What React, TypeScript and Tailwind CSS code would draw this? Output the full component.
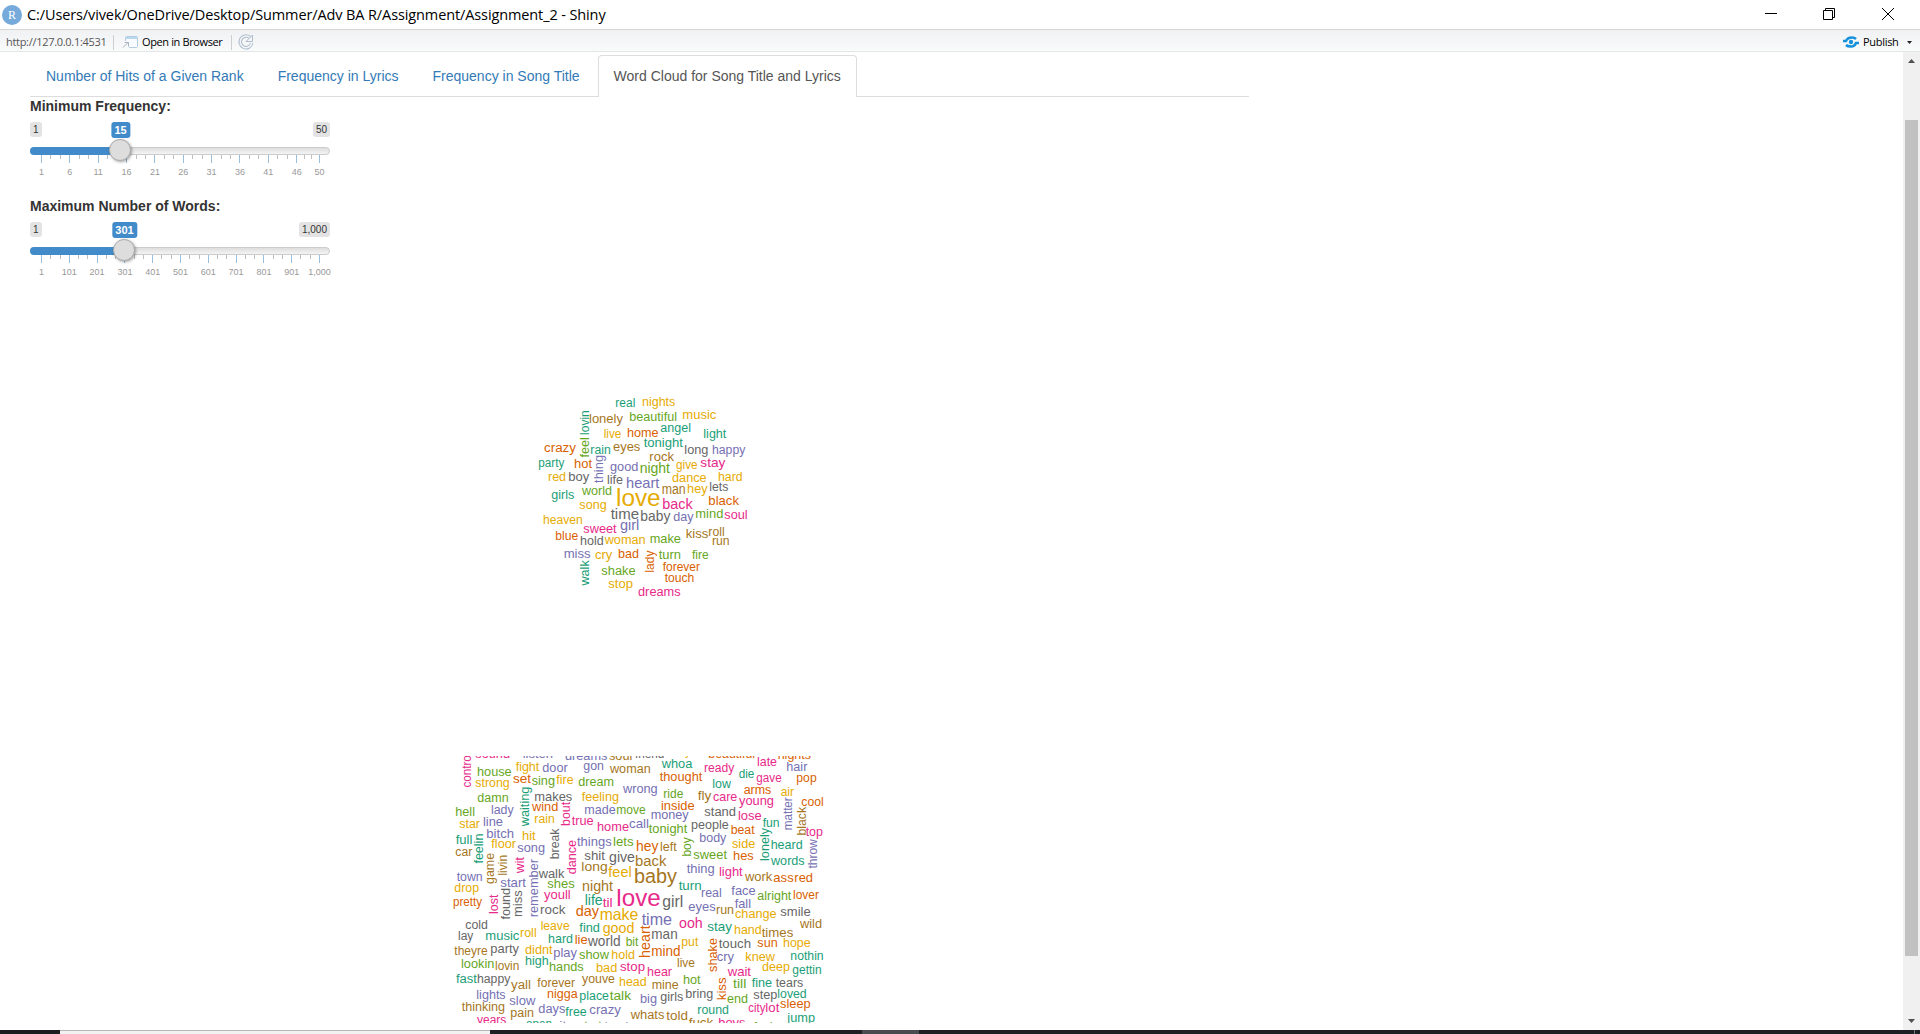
import React from "react";

const PALETTE: Record<string, string> = {
  g: "#1b9e77",
  o: "#d95f02",
  p: "#7570b3",
  k: "#e7298a",
  l: "#66a61e",
  y: "#e6ab02",
  b: "#a6761d",
  d: "#666666",
};

// text, start, end, baseline, colour, font size, vertical
// Start, end and baseline are in thirds of a pixel. For vertical words start is
// the lower end, end the upper one, and baseline the x of the baseline.
type Word = [string, number, number, number, string, number?, boolean?];

const TITLE_TOP: Word[] = [
  ["real", 256, 316, 53, "g"], ["nights", 336, 436, 50, "y"], ["lonely", 177, 279, 101, "b"],
  ["beautiful", 298, 441, 93, "l"], ["music", 457, 559, 87, "y"], ["live", 221, 274, 146, "y"],
  ["home", 291, 386, 142, "o", 13], ["angel", 391, 483, 126, "g"], ["light", 520, 589, 146, "g"],
  ["crazy", 42, 138, 186, "o"], ["rain", 181, 242, 194, "g"], ["eyes", 249, 331, 183, "b"],
  ["tonight", 341, 459, 171, "g"], ["long", 463, 535, 192, "d", 12.5], ["happy", 546, 646, 192, "p"],
  ["party", 25, 103, 231, "g"], ["hot", 132, 186, 236, "o", 13], ["good", 240, 325, 243, "p", 13],
  ["rock", 358, 432, 215, "b", 13], ["night", 329, 420, 249, "l", 14], ["give", 438, 503, 237, "y"],
  ["stay", 511, 586, 231, "k", 13], ["red", 54, 108, 273, "y"], ["boy", 115, 178, 274, "d", 13],
  ["life", 231, 279, 284, "d", 13], ["heart", 288, 388, 294, "p", 15], ["dance", 426, 530, 276, "y"],
  ["hard", 564, 638, 273, "y"], ["girls", 64, 133, 327, "g"], ["world", 156, 246, 317, "l", 13],
  ["man", 395, 467, 314, "b", 14], ["hey", 471, 533, 311, "y", 13], ["lets", 538, 595, 305, "d", 13],
  ["lovin", 136, 62, 178, "g", 12.5, true], ["feel", 204, 143, 178, "l", 13, true], ["thing", 280, 196, 219, "p", 12.5, true],
];

const TITLE_BOTTOM: Word[] = [
  ["love", 258, 392, 35, "y", 23.5], ["song", 148, 230, 42, "y"], ["back", 397, 488, 42, "k", 14],
  ["black", 535, 627, 30, "o", 13], ["time", 242, 327, 72, "d", 15], ["baby", 331, 421, 80, "d", 14],
  ["day", 430, 491, 80, "p", 13], ["mind", 496, 580, 69, "l", 13], ["soul", 583, 653, 72, "k", 13],
  ["heaven", 39, 158, 89, "y"], ["sweet", 160, 260, 114, "k", 13], ["girl", 270, 328, 106, "p", 14.5],
  ["blue", 76, 145, 135, "o", 13], ["hold", 150, 221, 152, "d", 13], ["woman", 224, 347, 147, "y"],
  ["make", 359, 453, 144, "l", 13], ["kiss", 467, 535, 131, "b", 13], ["roll", 535, 584, 123, "b"],
  ["run", 546, 599, 150, "b"], ["miss", 101, 182, 189, "p"], ["cry", 195, 247, 192, "y"],
  ["bad", 264, 327, 189, "o", 13], ["turn", 386, 453, 192, "l"], ["fire", 486, 536, 192, "l"],
  ["shake", 214, 317, 242, "l"], ["forever", 398, 510, 228, "o"], ["touch", 404, 493, 261, "o"],
  ["stop", 235, 309, 279, "y"], ["dreams", 324, 452, 303, "k"],
  ["walk", 273, 197, 177, "g", 12.5, true], ["lady", 234, 168, 371, "o", 12.5, true],
];

const LYRICS_NW: Word[] = [
  ["sound", 91, 195, 26, "k"], ["listen", 233, 324, 25, "p"], ["dreams", 360, 487, 30, "p"],
  ["soul", 492, 562, 30, "b"], ["fight", 212, 283, 63, "y"], ["door", 292, 368, 68, "p"],
  ["gon", 415, 477, 62, "p"], ["woman", 495, 617, 69, "b"], ["house", 96, 200, 80, "l"],
  ["strong", 91, 194, 113, "y"], ["set", 204, 258, 101, "o", 13], ["sing", 260, 330, 105, "l", 13],
  ["fire", 334, 386, 104, "y"], ["dream", 400, 507, 110, "l"], ["wrong", 534, 638, 131, "p"],
  ["damn", 97, 191, 158, "l"], ["makes", 268, 382, 155, "d", 13], ["feeling", 410, 522, 155, "y"],
  ["hell", 31, 90, 200, "l"], ["lady", 138, 206, 192, "p"], ["wind", 261, 340, 185, "o", 13],
  ["made", 418, 512, 194, "p", 13], ["move", 514, 602, 192, "l"], ["star", 43, 105, 234, "y"],
  ["line", 114, 174, 230, "p", 13], ["rain", 268, 329, 219, "y"], ["true", 380, 446, 227, "k", 13],
  ["home", 456, 552, 245, "k", 13], ["call", 552, 612, 236, "p", 13], ["bitch", 124, 207, 264, "p"],
  ["hit", 231, 272, 272, "y", 13], ["full", 32, 82, 284, "g", 13], ["floor", 139, 213, 296, "y"],
  ["song", 217, 300, 308, "p"], ["things", 396, 500, 288, "p", 13], ["lets", 504, 566, 290, "l", 13],
  ["car", 31, 82, 320, "b"], ["shit", 418, 480, 330, "d", 13], ["give", 492, 570, 336, "d", 14.5],
  ["long", 409, 488, 363, "b", 13.5], ["feel", 490, 560, 382, "y", 15], ["walk", 281, 358, 384, "d"],
  ["town", 35, 113, 395, "p"], ["start", 166, 243, 413, "p", 13], ["shes", 307, 389, 416, "l"],
  ["night", 411, 504, 423, "b", 14],
  ["control", 114, 9, 77, "k", 12.5, true], ["waiting", 230, 111, 252, "g", 12.5, true],
  ["bout", 229, 157, 375, "k", 13, true], ["feelin", 342, 252, 113, "g", 12.5, true],
  ["break", 329, 237, 342, "d", 12.5, true], ["game", 403, 310, 146, "b", 12.5, true],
  ["livin", 378, 316, 187, "b", 12.5, true], ["wit", 371, 322, 237, "k", 13, true],
  ["dance", 374, 271, 394, "k", 12.5, true], ["remember", 503, 328, 278, "p", 12.5, true],
];

const LYRICS_NE: Word[] = [
  ["friend", 0, 88, 24, "d"], ["say", 118, 166, 17, "y"], ["beautiful", 220, 360, 25, "o"], ["nights", 428, 528, 28, "o"],
  ["whoa", 80, 172, 56, "g"], ["ready", 207, 298, 68, "k"], ["late", 366, 426, 48, "k", 13],
  ["hair", 454, 517, 65, "p"], ["thought", 74, 202, 93, "o"], ["die", 311, 358, 84, "g"],
  ["gave", 364, 440, 96, "k"], ["pop", 484, 545, 96, "o"], ["low", 232, 288, 116, "g"],
  ["ride", 85, 145, 146, "l", 13], ["fly", 188, 229, 152, "b", 13], ["care", 234, 307, 153, "k", 13],
  ["arms", 326, 409, 132, "o"], ["air", 437, 477, 138, "y"], ["inside", 78, 179, 180, "o", 13],
  ["young", 312, 417, 165, "k", 13], ["cool", 499, 566, 168, "o"], ["money", 47, 161, 207, "p"],
  ["stand", 208, 303, 198, "d"], ["lose", 309, 380, 212, "k"], ["fun", 383, 434, 233, "g", 13],
  ["tonight", 41, 157, 251, "l"], ["people", 168, 281, 237, "d"], ["beat", 287, 359, 254, "o"],
  ["top", 512, 564, 260, "k"], ["body", 193, 274, 278, "p"], ["hey", 3, 70, 305, "o", 14],
  ["left", 75, 125, 303, "b", 13], ["side", 291, 361, 294, "y", 13], ["heard", 407, 503, 299, "g", 13],
  ["sweet", 175, 276, 327, "l"], ["hes", 294, 356, 332, "o", 13], ["back", 0, 94, 350, "b", 14],
  ["words", 408, 509, 347, "g", 13], ["baby", -3, 126, 401, "b", 20], ["thing", 155, 239, 369, "p"],
  ["light", 252, 323, 380, "k"], ["work", 330, 412, 395, "b", 13], ["ass", 415, 476, 397, "o", 13],
  ["red", 478, 534, 398, "o", 13], ["turn", 131, 200, 422, "g", 13],
  ["boy", 321, 263, 168, "l", 12.5, true], ["matter", 242, 143, 471, "p", 12.5, true],
  ["black", 258, 172, 512, "b", 12.5, true], ["lonely", 334, 235, 402, "g", 12.5, true],
  ["throw", 357, 269, 545, "p", 12.5, true],
];

const LYRICS_SW: Word[] = [
  ["drop", 28, 102, 22, "y"], ["pretty", 24, 111, 65, "o"], ["youll", 297, 377, 44, "k"],
  ["life", 419, 473, 60, "g", 14.5], ["til", 473, 503, 66, "k", 13], ["rock", 285, 361, 87, "d", 13],
  ["day", 392, 462, 94, "o", 14.5], ["make", 464, 580, 107, "y", 16.5], ["cold", 61, 129, 132, "d"],
  ["leave", 287, 374, 135, "y"], ["find", 403, 465, 142, "g", 13], ["good", 473, 568, 144, "y", 15],
  ["lay", 39, 85, 165, "d"], ["music", 121, 223, 167, "g", 13], ["roll", 225, 275, 157, "y"],
  ["hard", 309, 384, 174, "g", 13], ["lie", 389, 428, 179, "o", 13], ["world", 429, 527, 185, "d", 14],
  ["bit", 542, 580, 185, "l", 13], ["theyre", 28, 128, 212, "b"], ["party", 136, 222, 204, "d", 13],
  ["didnt", 240, 323, 209, "y", 13], ["play", 325, 396, 216, "p", 13], ["show", 402, 492, 222, "l", 13],
  ["hold", 499, 570, 224, "y", 13], ["lookin", 48, 148, 251, "l"], ["lovin", 150, 223, 257, "b"],
  ["high", 240, 311, 242, "g", 13], ["hands", 312, 416, 260, "l"], ["bad", 453, 517, 263, "y"],
  ["stop", 525, 600, 258, "k", 13], ["fast", 33, 96, 296, "g"], ["happy", 96, 196, 294, "d"],
  ["youve", 411, 510, 294, "b"], ["head", 522, 605, 303, "y"], ["yall", 198, 258, 312, "b"],
  ["forever", 277, 390, 308, "b"], ["lights", 94, 182, 342, "p"], ["slow", 193, 271, 362, "p"],
  ["nigga", 306, 398, 341, "o"], ["place", 403, 492, 347, "g"], ["talk", 494, 558, 345, "l"],
  ["thinking", 50, 180, 380, "b"], ["pain", 196, 267, 398, "b"], ["days", 280, 361, 384, "p"],
  ["free", 361, 425, 395, "g", 13], ["crazy", 433, 528, 387, "p"], ["whats", 557, 658, 402, "b"],
  ["years", 96, 184, 419, "k"], ["open", 243, 321, 431, "g"], ["it", 343, 364, 437, "p"], ["start", 400, 470, 437, "l"], ["hand", 480, 549, 438, "p"],
  ["lost", 88, 30, 158, "k", 12.5, true], ["found", 105, 10, 195, "d", 12.5, true],
  ["miss", 97, 17, 231, "d", 12.5, true],
];

const LYRICS_SE: Word[] = [
  ["love", -56, 77, 65, "k", 24], ["girl", 82, 145, 66, "d", 16], ["real", 198, 260, 36, "p"],
  ["face", 289, 362, 32, "p"], ["alright", 367, 469, 45, "l"], ["lover", 474, 552, 44, "o"],
  ["eyes", 160, 242, 80, "p"], ["run", 243, 297, 87, "b", 13], ["fall", 299, 348, 69, "p", 13],
  ["change", 300, 425, 101, "y"], ["smile", 436, 527, 95, "d", 13], ["time", 20, 111, 122, "p", 16.5],
  ["ooh", 132, 203, 129, "k", 14], ["stay", 217, 291, 138, "g", 13], ["hand", 297, 380, 147, "y"],
  ["times", 380, 475, 156, "b", 13], ["wild", 495, 561, 129, "b"], ["man", 49, 128, 164, "d", 14.5],
  ["put", 139, 190, 183, "y"], ["touch", 251, 348, 191, "d", 13], ["sun", 367, 428, 186, "o", 13],
  ["hope", 444, 527, 186, "y"], ["mind", 49, 137, 213, "o", 14], ["cry", 245, 297, 230, "p"],
  ["knew", 331, 420, 228, "y"], ["nothin", 466, 566, 227, "g"], ["live", 126, 180, 248, "b"],
  ["deep", 381, 465, 260, "y"], ["gettin", 472, 560, 269, "g"], ["hear", 36, 111, 275, "k", 13],
  ["wait", 278, 348, 275, "k", 13], ["mine", 50, 131, 314, "b", 13], ["hot", 144, 197, 299, "l"],
  ["till", 294, 334, 311, "l"], ["fine", 350, 411, 308, "g", 13], ["tears", 422, 505, 308, "d"],
  ["big", 15, 66, 356, "p"], ["girls", 76, 145, 350, "d", 13], ["bring", 151, 235, 339, "d"],
  ["end", 276, 339, 354, "l"], ["step", 355, 427, 342, "d"], ["loved", 427, 515, 339, "g", 13],
  ["round", 187, 282, 387, "g"], ["city", 340, 391, 381, "k"], ["lot", 391, 433, 381, "k"],
  ["sleep", 435, 527, 371, "o"], ["told", 94, 159, 405, "b"], ["jump", 457, 540, 413, "g"],
  ["fuck", 161, 235, 428, "b"], ["boys", 250, 331, 428, "k"], ["feels", 356, 430, 438, "l"],
  ["heart", 220, 122, 46, "o", 14, true], ["shake", 262, 160, 245, "o", 12.5, true],
  ["kiss", 347, 278, 272, "o", 13, true],
];

function Words({ words, dx, dy }: { words: Word[]; dx: number; dy: number }) {
  return (
    <>
      {words.map(([text, start, end, base, color, size = 12.5, vertical], i) => {
        const x = dx + (vertical ? base : start) / 3;
        const y = dy + (vertical ? start : base) / 3;
        return (
          <text
            key={i}
            x={x}
            y={y}
            fontSize={size}
            fill={PALETTE[color]}
            textLength={Math.abs(end - start) / 3}
            lengthAdjust="spacingAndGlyphs"
            transform={vertical ? `rotate(-90 ${x} ${y})` : undefined}
          >
            {text}
          </text>
        );
      })}
    </>
  );
}

type SliderProps = {
  label: string;
  min: string;
  max: string;
  value: string;
  position: number;
  step: number;
  ticks: string[];
};

function Slider({ label, min, max, value, position, step, ticks }: SliderProps) {
  const majors = ticks.map((_, i) => (i === ticks.length - 1 ? 289.5 : 11.5 + i * step));
  return (
    <div className="h-[100px] w-[300px]">
      <div className="h-[26px] text-[14px] leading-5 font-bold text-[#333333]">{label}</div>
      <div className="relative flex h-[25px] items-start justify-between text-[10px] leading-[15px] text-[#333333]">
        <span className="rounded-[3px] bg-[#e3e3e3] px-[3px]">{min}</span>
        <span className="rounded-[3px] bg-[#e3e3e3] px-[3px]">{max}</span>
        <span
          className="absolute top-0 -translate-x-1/2 rounded-[3px] bg-[#428bca] px-[3.5px] text-[11px] leading-4 font-bold text-white"
          style={{ left: position + 0.5 }}
        >
          {value}
        </span>
      </div>
      <div className="relative h-2 rounded-lg border border-[#cccccc] bg-gradient-to-b from-[#dedede] to-white to-150%">
        <div className="absolute -top-px -left-px h-2 rounded-l-lg bg-[#428bca]" style={{ width: position }} />
        <div
          className="absolute -top-[9px] z-10 size-[22px] -translate-x-1/2 rounded-full border border-[#ababab] bg-[#dddddd] shadow-[1px_1px_3px_rgba(0,0,0,0.35)]"
          style={{ left: position - 1 }}
        />
      </div>
      <svg width="310" height="30" className="block overflow-visible" fontFamily="Liberation Sans, Arial, sans-serif">
        {majors.map((x, i) => {
          const next = majors[i + 1];
          return (
            <g key={i}>
              <rect x={Math.round(x - 0.5)} y="0" width="1" height="8" fill="#99bfdd" />
              {next !== undefined &&
                [1, 2].map((n) => (
                  <rect key={n} x={Math.round(x - 0.5 + ((next - x) * n) / 3)} y="0" width="1" height="4" fill="#bfbfbf" />
                ))}
              <text x={x} y="20" textAnchor="middle" fontSize="9" fill="#999999">
                {ticks[i]}
              </text>
            </g>
          );
        })}
      </svg>
    </div>
  );
}

const TABS = ["Number of Hits of a Given Rank", "Frequency in Lyrics", "Frequency in Song Title"];

export default function App() {
  return (
    <div className="flex h-[1034px] w-[1920px] flex-col overflow-hidden bg-white font-['Liberation_Sans',Arial,sans-serif]">
      <header className="flex h-[29px] items-center bg-white pl-[2px] font-['Open_Sans',sans-serif] text-black">
        <div className="flex size-5 items-center justify-center rounded-full bg-[#75aadb] font-['Liberation_Serif',serif] text-[12px] text-white">
          R
        </div>
        <h1 className="ml-[5px] text-[14.5px] tracking-[-0.11px] whitespace-nowrap">
          C:/Users/vivek/OneDrive/Desktop/Summer/Adv BA R/Assignment/Assignment_2 - Shiny
        </h1>
        <svg className="mr-[25px] ml-auto shrink-0" width="130" height="29" fill="none" stroke="#000">
          <path d="M0 13.5h12" />
          <path d="M58.5 10.5h9v9h-9zM60.5 10.5v-2h9v9h-2" />
          <path d="M117 8l12 12M129 8l-12 12" />
        </svg>
      </header>

      <div className="flex h-[23px] items-center border-y border-t-[#d6d6d6] border-b-[#e4e5e6] bg-gradient-to-b from-[#eff1f3] to-[#fafbfb] pt-[3px] font-['Open_Sans',sans-serif] text-[11px] text-black">
        <span className="ml-[6px] w-[99px] tracking-[-0.3px] text-[#555555]">http://127.0.0.1:4531</span>
        <span className="ml-2 h-[15px] w-px bg-[#cdd0d2]" />
        <svg className="ml-[8px]" width="16" height="14" fill="none">
          <rect x="3.5" y="1.5" width="12" height="11" rx="1" fill="#f7fbff" stroke="#b4cde2" />
          <path d="M4 2h11v2H4z" fill="#b7d8ef" />
          <path d="M0 6h7v7H0z" fill="#f6f8f9" />
          <path d="M1 12.5L6 7.500M2.500 7.500H6.500v4" stroke="#a9b2bb" />
        </svg>
        <span className="ml-[4px] w-[81px] tracking-[-0.38px] whitespace-nowrap">Open in Browser</span>
        <span className="ml-2 h-[15px] w-px bg-[#cdd0d2]" />
        <svg className="ml-[6px]" width="17" height="16" fill="none" stroke="#aebccb">
          <path d="M12.500 4.200A5.800 5.800 0 1 0 13.700 9" strokeWidth="3.600" />
          <path d="M12.500 4.200A5.800 5.800 0 1 0 13.700 9" stroke="#f3f6f9" strokeWidth="1.600" />
          <path d="M14.500 1v6.500H8z" fill="#f3f6f9" />
        </svg>
        <svg className="ml-auto" width="16" height="12" fill="none" stroke="#1592dd" strokeWidth="2.500">
          <path d="M0 5h3c1-2.500 3-3.500 6-3.500 2 0 3 .5 4 1.500M16 7h-3c-1 2.500-3 3.500-5 3.500-2 0-4-.5-5-1.500" />
          <circle cx="8" cy="6" r="2.200" fill="#1592dd" stroke="none" />
        </svg>
        <span className="ml-[4px] w-[36px] tracking-[-0.3px]">Publish</span>
        <svg className="mr-[8px] ml-[8px]" width="5" height="3">
          <path d="M0 0h5L2.500 3z" fill="#222" />
        </svg>
      </div>

      <div className="flex h-[978px]">
        <main className="flex-1 pl-[30px]">
          <nav className="flex h-[45px] w-[1219px] items-end border-b border-[#dddddd] text-[14px] leading-5">
            {TABS.map((tab) => (
              <a key={tab} className="mr-[2px] px-4 py-[10px] whitespace-nowrap text-[#337ab7]">
                {tab}
              </a>
            ))}
            <a className="-mb-px rounded-t border border-b-0 border-[#dddddd] bg-white px-[15px] pt-[10px] pb-[11px] whitespace-nowrap text-[#555555]">
              Word Cloud for Song Title and Lyrics
            </a>
          </nav>
          <div className="flex">
            <aside className="-mt-px w-[300px]">
              <Slider
                label="Minimum Frequency:"
                min="1"
                max="50"
                value="15"
                position={90}
                step={28.35}
                ticks={["1", "6", "11", "16", "21", "26", "31", "36", "41", "46", "50"]}
              />
              <Slider
                label="Maximum Number of Words:"
                min="1"
                max="1,000"
                value="301"
                position={94}
                step={27.8}
                ticks={["1", "101", "201", "301", "401", "501", "601", "701", "801", "901", "1,000"]}
              />
            </aside>
            <section className="mt-[293px] ml-[115px] w-[400px]">
              <svg className="block" width="400" height="366">
                <Words words={TITLE_TOP} dx={85} dy={-0.4} />
                <Words words={TITLE_BOTTOM} dx={85} dy={104.6} />
              </svg>
              <svg className="block" width="400" height="267">
                <Words words={LYRICS_NW} dx={0} dy={-6.4} />
                <Words words={LYRICS_NE} dx={190} dy={-6.4} />
                <Words words={LYRICS_SW} dx={0} dy={128.6} />
                <Words words={LYRICS_SE} dx={190} dy={128.6} />
              </svg>
            </section>
          </div>
        </main>
        <div className="flex w-[17px] flex-col items-center bg-[#f0f0f0]">
          <svg className="mt-[7px] mb-[57px]" width="7" height="4">
            <path d="M0 4L3.500 0L7 4z" fill="#505050" />
          </svg>
          <div className="h-[836px] w-[13px] bg-[#c1c1c1]" />
          <svg className="mt-auto mb-[7px]" width="7" height="4">
            <path d="M0 0h7L3.500 4z" fill="#505050" />
          </svg>
        </div>
      </div>

      <footer className="flex h-1 bg-[#1e1f24]">
        <div className="w-[60px] bg-[#1c1d20]" />
        <div className="w-[430px] border-t border-[#b5b5b5] bg-[#f2f2f2]" />
        <div className="ml-[372px] w-[57px] bg-[#4a4b50]" />
        <div className="ml-auto mr-[5px] w-px bg-[#77787c]" />
      </footer>
    </div>
  );
}
